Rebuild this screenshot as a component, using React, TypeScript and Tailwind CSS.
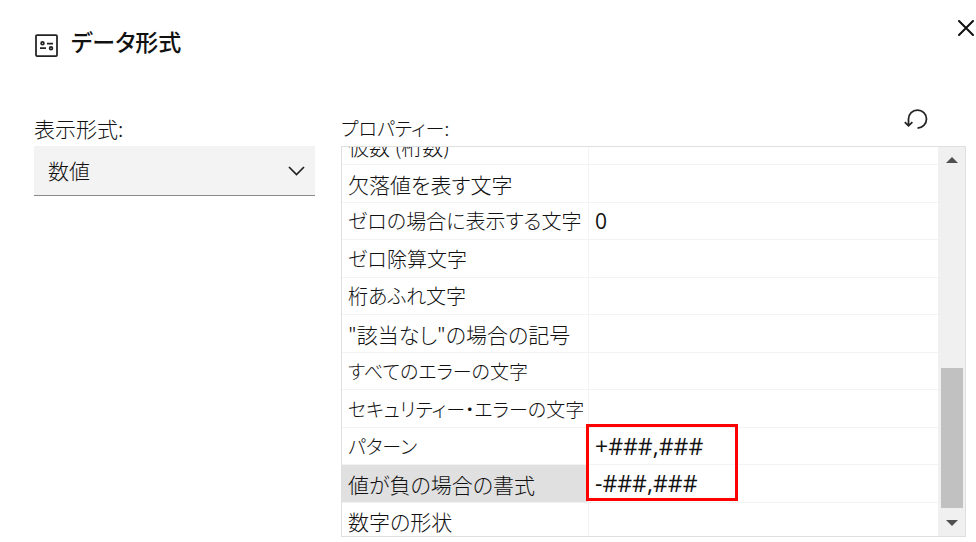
import { useLayoutEffect, useRef } from "react";

type Row = {
  id: string;
  label: string;
  value: string;
  size: "text-[19px]" | "text-[20px]" | "text-[21px]";
  selected?: boolean;
  marked?: boolean;
};

const rows: Row[] = [
  { id: "mantissa", label: "仮数 (桁数)", value: "", size: "text-[21px]" },
  { id: "missing", label: "欠落値を表す文字", value: "", size: "text-[21px]" },
  { id: "zero", label: "ゼロの場合に表示する文字", value: "0", size: "text-[20px]" },
  { id: "divzero", label: "ゼロ除算文字", value: "", size: "text-[20px]" },
  { id: "overflow", label: "桁あふれ文字", value: "", size: "text-[20px]" },
  { id: "na", label: "\"該当なし\"の場合の記号", value: "", size: "text-[21px]" },
  { id: "errors", label: "すべてのエラーの文字", value: "", size: "text-[19px]" },
  { id: "security", label: "セキュリティー・エラーの文字", value: "", size: "text-[19px]" },
  { id: "pattern", label: "パターン", value: "+###,###", size: "text-[19px]", marked: true },
  { id: "negative", label: "値が負の場合の書式", value: "-###,###", size: "text-[21px]", selected: true },
  { id: "digits", label: "数字の形状", value: "", size: "text-[21px]" },
];

function FormatIcon() {
  return (
    <svg className="mt-2.5 ml-px" width="24" height="24" viewBox="0 0 24 24" fill="none" stroke="#222" strokeWidth="1.75" aria-hidden="true">
      <rect x="1" y="1" width="21" height="21" rx="1" />
      <circle cx="7.5" cy="9.3" r="1.4" />
      <path d="M12 9.5h6M5 14h6" />
      <circle cx="16" cy="14.2" r="1.4" />
    </svg>
  );
}

function PropertyTable() {
  const scroller = useRef<HTMLDivElement>(null);

  useLayoutEffect(() => {
    if (scroller.current) scroller.current.scrollTop = 19;
  }, []);

  return (
    <div className="flex min-h-0 flex-1 border border-[#dfdfdf]">
      <div ref={scroller} className="min-w-0 flex-1 overflow-x-hidden overflow-y-auto [scrollbar-width:none]">
        <table className="w-full table-fixed border-separate border-spacing-0" aria-labelledby="properties-label">
          <tbody>
            {rows.map((row) => (
              <tr key={row.id} className="odd:h-[37px] even:h-[38px]">
                <th
                  scope="row"
                  className={`w-[247px] border-r border-b border-[#f3f3f3] p-0 pl-1.5 text-left font-light whitespace-nowrap ${row.selected ? "bg-[#e0e0e0]" : ""}`}
                >
                  <label htmlFor={row.id} className={`block leading-8 ${row.size}`}>
                    {row.label}
                  </label>
                </th>
                <td className="relative border-b border-[#f3f3f3] p-0">
                  <input
                    id={row.id}
                    defaultValue={row.value}
                    className={`block h-8 w-full bg-transparent pl-1.5 font-['Open_Sans','Noto_Sans_CJK_JP',sans-serif] font-normal outline-none ${row.value.length > 1 ? "text-[23px]" : "text-[21px]"}`}
                  />
                  {row.marked && (
                    <div className="pointer-events-none absolute -top-1 -left-[3px] z-10 h-[77px] w-[152px] border-3 border-[#ff0000]" />
                  )}
                </td>
              </tr>
            ))}
          </tbody>
        </table>
      </div>
      <div className="flex w-[27px] flex-col items-center bg-[#f0f0f0] py-2.5" aria-hidden="true">
        <svg width="12" height="6" viewBox="0 0 12 6" fill="#505050">
          <path d="M6 0l6 6H0z" />
        </svg>
        <div className="flex-1" />
        <div className="mb-3 h-[140px] w-[22px] bg-[#c1c1c1]" />
        <svg width="12" height="6" viewBox="0 0 12 6" fill="#505050">
          <path d="M0 0h12L6 6z" />
        </svg>
      </div>
    </div>
  );
}

export default function App() {
  return (
    <main className="flex h-screen flex-col bg-white pr-2.5 pb-[5px] pl-[34px] font-['Noto_Sans_CJK_JP',sans-serif] text-[21px] font-light text-[#111] [font-feature-settings:'palt']">
      <header className="flex h-[58px] items-start justify-between pt-4">
        <h1 className="flex items-center gap-3 pt-2 text-[23px] leading-8 font-medium">
          <FormatIcon />
          データ形式
        </h1>
        <button type="button" aria-label="閉じる" className="-mr-3 flex size-6 items-center justify-center">
          <svg width="16" height="16" viewBox="0 0 16 16" fill="none" stroke="#111" strokeWidth="2" strokeLinecap="round" aria-hidden="true">
            <path d="M1 1l14 14M15 1L1 15" />
          </svg>
        </button>
      </header>
      <div className="flex min-h-0 flex-1 gap-[26px] pt-12">
        <section className="w-[281px] shrink-0 pt-1.5">
          <label htmlFor="format" className="mb-0.5 block leading-8">
            表示形式:
          </label>
          <div className="grid">
            <select
              id="format"
              defaultValue="number"
              className="col-start-1 row-start-1 h-[50px] appearance-none border-b border-[#8a8a8a] bg-[#f3f3f3] pl-3.5 outline-none"
            >
              <option value="number">数値</option>
            </select>
            <svg
              className="pointer-events-none col-start-1 row-start-1 mr-2.5 self-center justify-self-end"
              width="17"
              height="10"
              viewBox="0 0 17 10"
              fill="none"
              stroke="#222"
              strokeWidth="1.75"
              aria-hidden="true"
            >
              <path d="M1 1l7.5 7.5L16 1" />
            </svg>
          </div>
        </section>
        <section className="flex min-w-0 flex-1 flex-col">
          <div className="mb-0.5 flex items-start justify-between pr-[38px]">
            <h2 id="properties-label" className="pt-1.5 text-[19px] leading-8">
              プロパティー:
            </h2>
            <button type="button" aria-label="リセット" className="mt-px flex size-6 items-center justify-center">
              <svg width="24" height="22" viewBox="0 0 24 22" fill="none" stroke="#222" strokeWidth="1.75" aria-hidden="true">
                <path d="M13.5 20a9 9 0 1 0-9-9v7M.8 14.2l3.7 3.7 3.9-3.7" />
              </svg>
            </button>
          </div>
          <PropertyTable />
        </section>
      </div>
    </main>
  );
}
